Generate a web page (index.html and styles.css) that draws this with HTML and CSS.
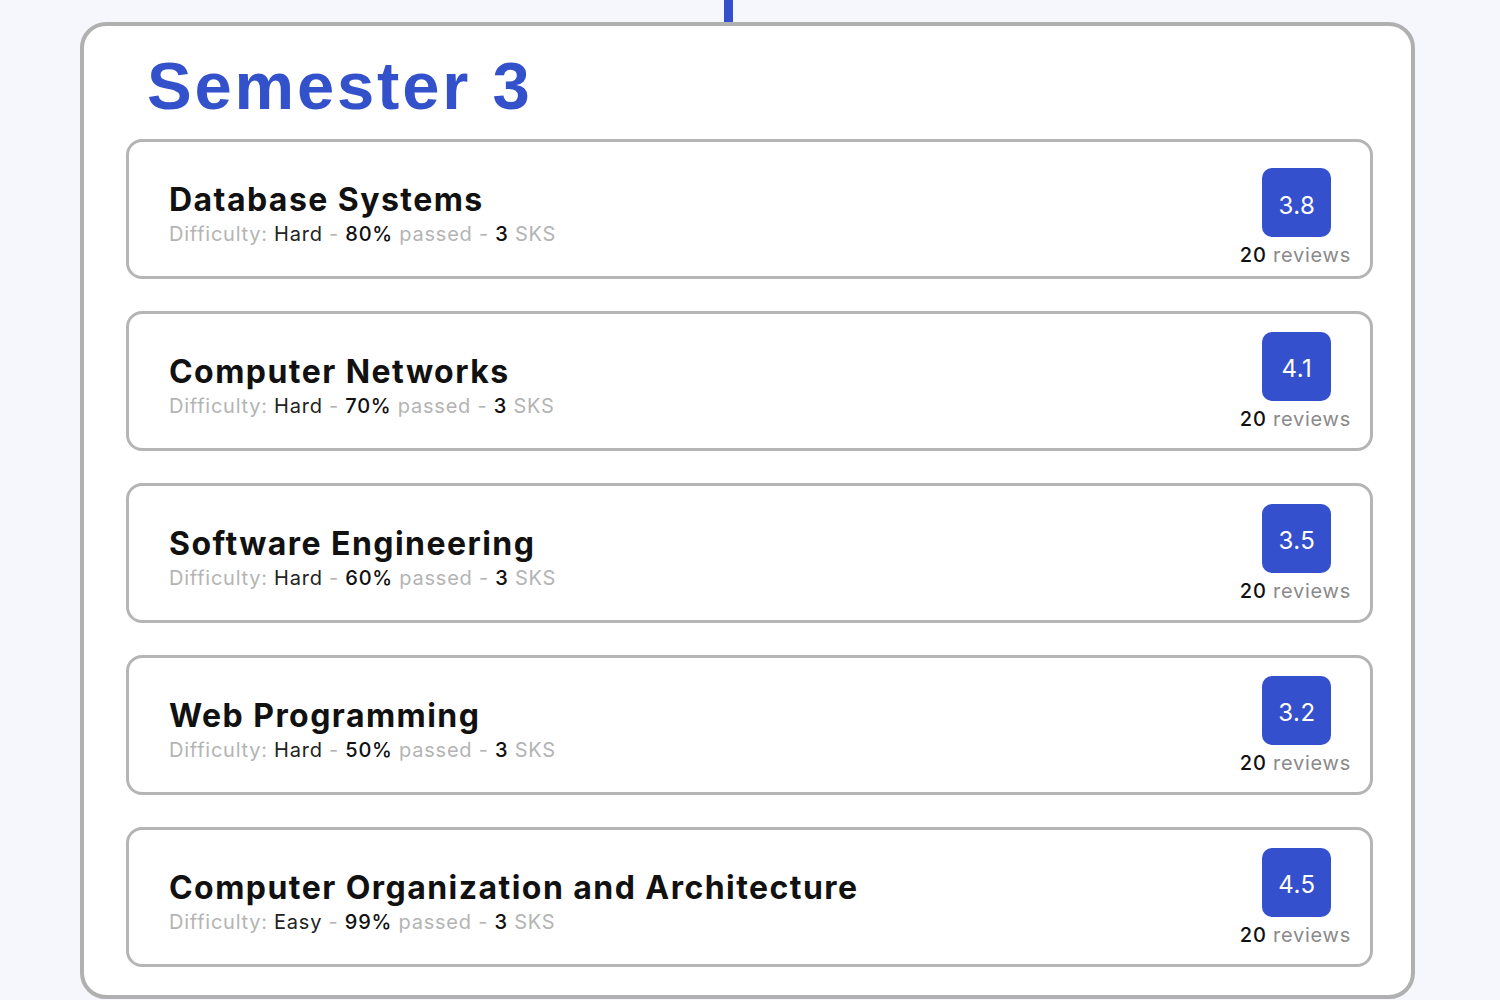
FILE: index.html
```html
<!DOCTYPE html>
<html lang="en">
<head>
<meta charset="utf-8">
<title>Semester 3</title>
<link rel="stylesheet" href="styles.css">
</head>
<body>
<div class="page">
  <div class="connector"></div>
  <section class="semester">
    <h1 class="semester-title">Semester 3</h1>
    <div class="course-list">
      <div class="course">
        <div class="course-info">
          <div class="course-name">Database Systems</div>
          <div class="course-meta"><span class="muted">Difficulty:</span> <span class="val">Hard</span> <span class="muted">-</span> <span class="num">80%</span> <span class="muted">passed</span> <span class="muted">-</span> <span class="num">3</span> <span class="muted">SKS</span></div>
        </div>
        <div class="course-rating course-rating-low">
          <div class="badge">3.8</div>
          <div class="reviews"><span class="count">20</span> reviews</div>
        </div>
      </div>
      <div class="course">
        <div class="course-info">
          <div class="course-name">Computer Networks</div>
          <div class="course-meta"><span class="muted">Difficulty:</span> <span class="val">Hard</span> <span class="muted">-</span> <span class="num">70%</span> <span class="muted">passed</span> <span class="muted">-</span> <span class="num">3</span> <span class="muted">SKS</span></div>
        </div>
        <div class="course-rating">
          <div class="badge">4.1</div>
          <div class="reviews"><span class="count">20</span> reviews</div>
        </div>
      </div>
      <div class="course">
        <div class="course-info">
          <div class="course-name">Software Engineering</div>
          <div class="course-meta"><span class="muted">Difficulty:</span> <span class="val">Hard</span> <span class="muted">-</span> <span class="num">60%</span> <span class="muted">passed</span> <span class="muted">-</span> <span class="num">3</span> <span class="muted">SKS</span></div>
        </div>
        <div class="course-rating">
          <div class="badge">3.5</div>
          <div class="reviews"><span class="count">20</span> reviews</div>
        </div>
      </div>
      <div class="course">
        <div class="course-info">
          <div class="course-name">Web Programming</div>
          <div class="course-meta"><span class="muted">Difficulty:</span> <span class="val">Hard</span> <span class="muted">-</span> <span class="num">50%</span> <span class="muted">passed</span> <span class="muted">-</span> <span class="num">3</span> <span class="muted">SKS</span></div>
        </div>
        <div class="course-rating">
          <div class="badge">3.2</div>
          <div class="reviews"><span class="count">20</span> reviews</div>
        </div>
      </div>
      <div class="course">
        <div class="course-info">
          <div class="course-name">Computer Organization and Architecture</div>
          <div class="course-meta"><span class="muted">Difficulty:</span> <span class="val">Easy</span> <span class="muted">-</span> <span class="num">99%</span> <span class="muted">passed</span> <span class="muted">-</span> <span class="num">3</span> <span class="muted">SKS</span></div>
        </div>
        <div class="course-rating">
          <div class="badge">4.5</div>
          <div class="reviews"><span class="count">20</span> reviews</div>
        </div>
      </div>
    </div>
  </section>
</div>
</body>
</html>
```

FILE: styles.css
```css
html, body {
  margin: 0;
  padding: 0;
  background: #f5f7fc;
}

body {
  font-family: Inter, "Noto Sans", sans-serif;
  color: #111;
}

.page {
  padding-left: 80px;
}

.connector {
  width: 9px;
  height: 22px;
  margin-left: 644px;
  background: #3450cc;
}

.semester {
  width: 1335px;
  box-sizing: border-box;
  background: #fff;
  border: 4px solid #b0b0b0;
  border-radius: 26px;
  padding: 22px 38px 28px 42px;
}

.semester-title {
  margin: 0 0 15px 21px;
  font-family: "Liberation Sans", Arial, sans-serif;
  font-weight: 700;
  font-size: 67px;
  line-height: 76px;
  letter-spacing: 2.8px;
  color: #3451cc;
}

.course-list {
  display: flex;
  flex-direction: column;
  gap: 32px;
}

.course {
  height: 140px;
  box-sizing: border-box;
  border: 3px solid #b5b5b5;
  border-radius: 16px;
  display: flex;
  align-items: center;
  justify-content: space-between;
  padding: 0 19px 0 40px;
}

.course-info {
  padding-top: 10px;
}

.course-name {
  font-weight: 700;
  font-size: 32px;
  line-height: 38px;
  letter-spacing: 1.45px;
  color: #111;
}

.course-meta {
  margin-top: 1px;
  font-size: 20px;
  line-height: 28px;
  letter-spacing: 0.75px;
  color: #222;
}

.course-meta .muted {
  color: #b4b4b4;
}

.course-meta .num {
  color: #111;
  font-weight: 500;
}

.course-rating {
  display: flex;
  flex-direction: column;
  align-items: center;
}

.course-rating-low {
  margin-top: 17px;
}

.badge {
  width: 69px;
  height: 69px;
  box-sizing: border-box;
  padding-top: 5px;
  margin-left: 3px;
  border-radius: 10px;
  background: #3450cc;
  color: #fff;
  font-size: 24px;
  letter-spacing: 0.5px;
  display: flex;
  align-items: center;
  justify-content: center;
}

.reviews {
  margin-top: 6px;
  font-size: 20px;
  line-height: 24px;
  letter-spacing: 0.75px;
  color: #8a8a8a;
}

.reviews .count {
  color: #111;
  font-weight: 500;
}
```
